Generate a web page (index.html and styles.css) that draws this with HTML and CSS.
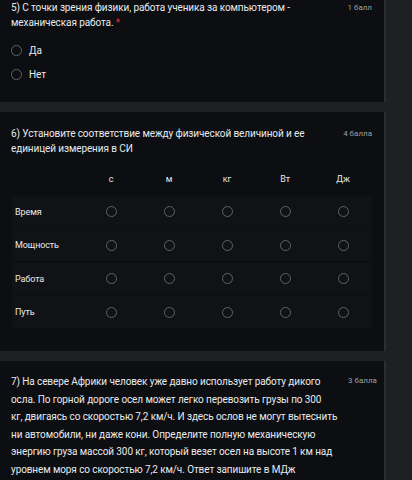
FILE: index.html
```html
<!DOCTYPE html>
<html lang="ru">
  <head>
    <meta charset="UTF-8" />
    <meta name="viewport" content="width=device-width, initial-scale=1.0" />
    <title>Форма</title>
    <link rel="stylesheet" href="styles.css">
  </head>
  <body>
    <div class="page">
      <div class="card card_first">
        <div class="head">
          <div class="title">5) С точки зрения физики, работа ученика за компьютером - механическая работа. <span class="req">*</span></div>
          <div class="points">1 балл</div>
        </div>
        <div class="options">
          <label class="option"><span class="radio"></span>Да</label>
          <label class="option"><span class="radio"></span>Нет</label>
        </div>
      </div>

      <div class="card card_grid">
        <div class="head">
          <div class="title">6) Установите соответствие между физической величиной и ее единицей измерения в СИ</div>
          <div class="points">4 балла</div>
        </div>
        <div class="grid">
          <div class="grid_head">
            <span></span>
            <span>с</span>
            <span>м</span>
            <span>кг</span>
            <span>Вт</span>
            <span>Дж</span>
          </div>
          <div class="grid_row">
            <span class="row_label">Время</span>
            <span class="cell"><span class="radio"></span></span>
            <span class="cell"><span class="radio"></span></span>
            <span class="cell"><span class="radio"></span></span>
            <span class="cell"><span class="radio"></span></span>
            <span class="cell"><span class="radio"></span></span>
          </div>
          <div class="grid_row">
            <span class="row_label">Мощность</span>
            <span class="cell"><span class="radio"></span></span>
            <span class="cell"><span class="radio"></span></span>
            <span class="cell"><span class="radio"></span></span>
            <span class="cell"><span class="radio"></span></span>
            <span class="cell"><span class="radio"></span></span>
          </div>
          <div class="grid_row">
            <span class="row_label">Работа</span>
            <span class="cell"><span class="radio"></span></span>
            <span class="cell"><span class="radio"></span></span>
            <span class="cell"><span class="radio"></span></span>
            <span class="cell"><span class="radio"></span></span>
            <span class="cell"><span class="radio"></span></span>
          </div>
          <div class="grid_row">
            <span class="row_label">Путь</span>
            <span class="cell"><span class="radio"></span></span>
            <span class="cell"><span class="radio"></span></span>
            <span class="cell"><span class="radio"></span></span>
            <span class="cell"><span class="radio"></span></span>
            <span class="cell"><span class="radio"></span></span>
          </div>
        </div>
      </div>

      <div class="card card_text">
        <div class="head">
          <div class="title">7) На севере Африки человек уже давно использует работу дикого<br>
            осла. По горной дороге осел может легко перевозить грузы по 300<br>
            кг, двигаясь со скоростью 7,2 км/ч. И здесь ослов не могут вытеснить<br>
            ни автомобили, ни даже кони. Определите полную механическую<br>
            энергию груза массой 300 кг, который везет осел на высоте 1 км над<br>
            уровнем моря со скоростью 7,2 км/ч. Ответ запишите в МДж</div>
          <div class="points">3 балла</div>
        </div>
      </div>
    </div>
  </body>
</html>
```

FILE: styles.css
```css
body {
  margin: 0;
  background-color: #1e2023;
  color: #e8eaed;
  font-family: Roboto, "Liberation Sans", sans-serif;
  font-size: 10px;
  letter-spacing: -0.1px;
}

.page {
  width: 386px;
  display: flex;
  flex-direction: column;
  gap: 10px;
}

.card {
  background-color: #0c0e11;
  border-right: 2px solid #2a2d31;
  padding: 14px 12px 23px 11px;
}

.card_first {
  padding-top: 0;
  padding-bottom: 16px;
}

.card_text {
  padding-top: 12px;
  padding-right: 14px;
  padding-bottom: 40px;
}

.head {
  display: flex;
  justify-content: space-between;
  gap: 4px;
}

.title {
  width: 326px;
  line-height: 15px;
}

.card_text .title {
  flex: none;
  width: 333px;
  line-height: 17.5px;
}

.points {
  flex-shrink: 0;
  font-size: 8px;
  line-height: 15px;
  letter-spacing: 0;
  color: #9aa0a6;
}

.req {
  color: #d93025;
}

.options {
  margin-top: 8px;
}

.option {
  display: flex;
  align-items: center;
  gap: 7px;
  height: 24px;
}

.radio {
  display: inline-block;
  width: 9px;
  height: 9px;
  border: 1.5px solid #5f6368;
  border-radius: 50%;
}

.grid {
  margin-top: 8px;
  margin-left: 1px;
}

.grid_head,
.grid_row {
  display: grid;
  grid-template-columns: 70px repeat(5, 58px);
  align-items: center;
}

.grid_head {
  height: 30px;
  text-align: center;
  font-size: 9px;
}

.grid_row {
  height: 32px;
  margin-top: 1.5px;
  background-color: #101215;
  font-size: 9px;
}

.row_label {
  padding-left: 3px;
}

.cell {
  display: flex;
  justify-content: center;
}
```
